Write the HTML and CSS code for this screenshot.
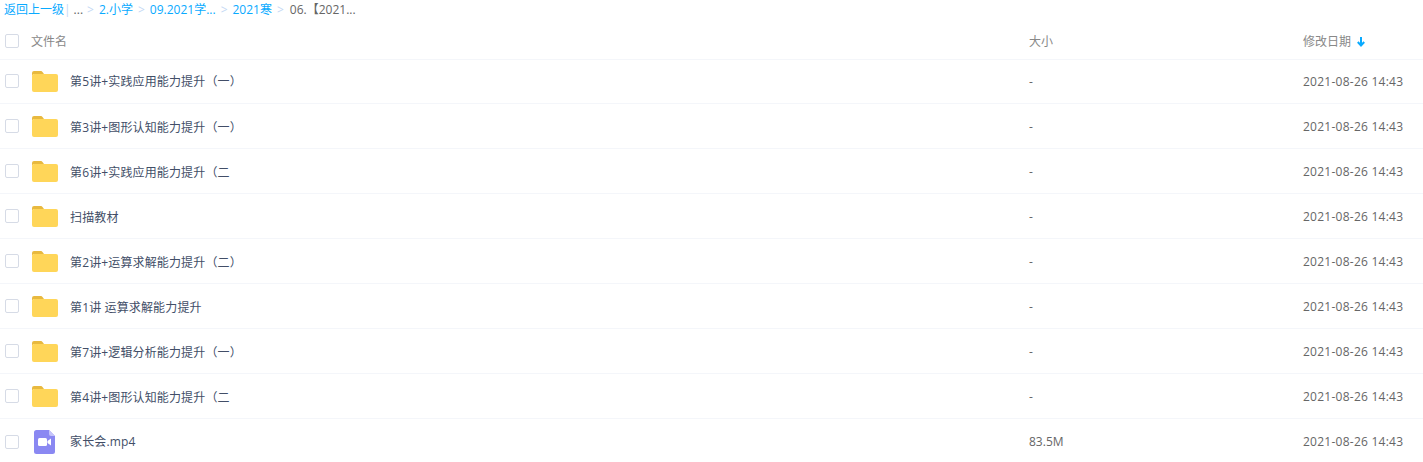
FILE: index.html
```html
<!DOCTYPE html>
<html lang="zh-CN">
<head>
<meta charset="utf-8">
<title>文件列表</title>
<link rel="stylesheet" href="styles.css">
</head>
<body>
<svg class="defs" width="0" height="0" aria-hidden="true">
  <symbol id="folder" viewBox="0 0 26 21">
    <path d="M0 2a2 2 0 0 1 2-2h6.500c1 0 1.600.5 2.200 1.200L12 3H1.500L0 5z" fill="#e8b93f"/>
    <path d="M0 5a2 2 0 0 1 2-2h22a2 2 0 0 1 2 2v14a2 2 0 0 1-2 2H2a2 2 0 0 1-2-2z" fill="#ffd659"/>
  </symbol>
  <symbol id="video" viewBox="0 0 21 24">
    <path d="M2.500 0H15l6 6v15.500a2.500 2.500 0 0 1-2.500 2.500h-16A2.500 2.500 0 0 1 0 21.500v-19A2.500 2.500 0 0 1 2.500 0z" fill="#8a88f2"/>
    <path d="M15 0l6 6h-4a2 2 0 0 1-2-2z" fill="#c5c4fa"/>
    <rect x="4" y="8" width="9" height="8" rx="1.500" fill="#fff"/>
    <path d="M13.500 11l3.500-2.500v7L13.500 13z" fill="#fff"/>
  </symbol>
</svg>
<nav class="crumbs">
  <a class="link">返回上一级</a><span class="bar">|</span><span class="dots">...</span><span class="sep">&gt;</span><a class="link">2.小学</a><span class="sep">&gt;</span><a class="link">09.2021学...</a><span class="sep">&gt;</span><a class="link">2021寒</a><span class="sep">&gt;</span><span class="current">06.【2021...</span>
</nav>
<div class="table">
  <div class="row head">
    <span class="check"></span><span class="name">文件名</span><span class="size">大小</span>
    <span class="date">修改日期<svg class="sort" width="10" height="11" viewBox="0 0 10 11"><path d="M5 1v8M1.800 6L5 9.500 8.200 6" fill="none" stroke="#09aaff" stroke-width="2"/></svg></span>
  </div>
  <div class="row first"><span class="check"></span><svg class="icon"><use href="#folder"/></svg><span class="name">第5讲+实践应用能力提升（一）</span><span class="size">-</span><span class="date">2021-08-26 14:43</span></div>
  <div class="row"><span class="check"></span><svg class="icon"><use href="#folder"/></svg><span class="name">第3讲+图形认知能力提升（一）</span><span class="size">-</span><span class="date">2021-08-26 14:43</span></div>
  <div class="row"><span class="check"></span><svg class="icon"><use href="#folder"/></svg><span class="name">第6讲+实践应用能力提升（二</span><span class="size">-</span><span class="date">2021-08-26 14:43</span></div>
  <div class="row"><span class="check"></span><svg class="icon"><use href="#folder"/></svg><span class="name">扫描教材</span><span class="size">-</span><span class="date">2021-08-26 14:43</span></div>
  <div class="row"><span class="check"></span><svg class="icon"><use href="#folder"/></svg><span class="name">第2讲+运算求解能力提升（二）</span><span class="size">-</span><span class="date">2021-08-26 14:43</span></div>
  <div class="row"><span class="check"></span><svg class="icon"><use href="#folder"/></svg><span class="name">第1讲 运算求解能力提升</span><span class="size">-</span><span class="date">2021-08-26 14:43</span></div>
  <div class="row"><span class="check"></span><svg class="icon"><use href="#folder"/></svg><span class="name">第7讲+逻辑分析能力提升（一）</span><span class="size">-</span><span class="date">2021-08-26 14:43</span></div>
  <div class="row"><span class="check"></span><svg class="icon"><use href="#folder"/></svg><span class="name">第4讲+图形认知能力提升（二</span><span class="size">-</span><span class="date">2021-08-26 14:43</span></div>
  <div class="row"><span class="check"></span><svg class="icon file"><use href="#video"/></svg><span class="name">家长会.mp4</span><span class="size">83.5M</span><span class="date">2021-08-26 14:43</span></div>
</div>
</body>
</html>
```
FILE: styles.css
```css
* { box-sizing: border-box; }
html, body { margin: 0; height: 462px; overflow: hidden; background: #fff; }
body { font: 12px/18px "Open Sans", "Noto Sans CJK SC", sans-serif; color: #424e67; }
.defs { position: absolute; }
.crumbs { display: flex; align-items: center; height: 20px; padding-left: 4px; white-space: nowrap; }
.link { color: #09aaff; }
.bar { color: #c4d8f4; margin: 0 3px 0 0; }
.dots { color: #666; margin-right: -1px; }
.sep { color: #c4d8f4; margin: 0 5px; }
.current { color: #666; margin-left: 1px; }
.table { display: flex; flex-direction: column; }
.row { display: flex; align-items: center; height: 45px; padding-left: 5px; border-bottom: 1px solid #f4f6fa; }
.row:last-child { border-bottom: 0; }
.head { height: 40px; color: #888; }
.first { height: 44px; }
.check { flex: none; width: 14px; height: 14px; margin-right: 11px; border: 1px solid #d6dbe6; border-radius: 2px; background: #fff; }
.first .check { margin-bottom: 2px; }
.head .check { margin-top: 2px; }
.icon { flex: none; width: 26px; height: 21px; margin: 0 12px 0 2px; }
.icon.file { width: 21px; height: 24px; margin: 0 15px 0 4px; }
.name { flex: none; width: 959px; padding-top: 4px; letter-spacing: .14px; }
.first .name, .row:last-child .name { padding-top: 0; }
.head .name { width: 999px; padding: 4px 0 0 1px; letter-spacing: 0; }
.size { flex: none; width: 274px; padding-top: 2px; color: #666; }
.first .size, .row:last-child .size { padding-top: 0; }
.head .size { padding-top: 4px; color: #888; }
.date { flex: none; display: flex; align-items: center; padding-top: 2px; color: #666; letter-spacing: .25px; }
.first .date, .row:last-child .date { padding-top: 0; }
.head .date { padding-top: 4px; color: #888; letter-spacing: 0; }
.sort { margin-left: 5px; }
```
